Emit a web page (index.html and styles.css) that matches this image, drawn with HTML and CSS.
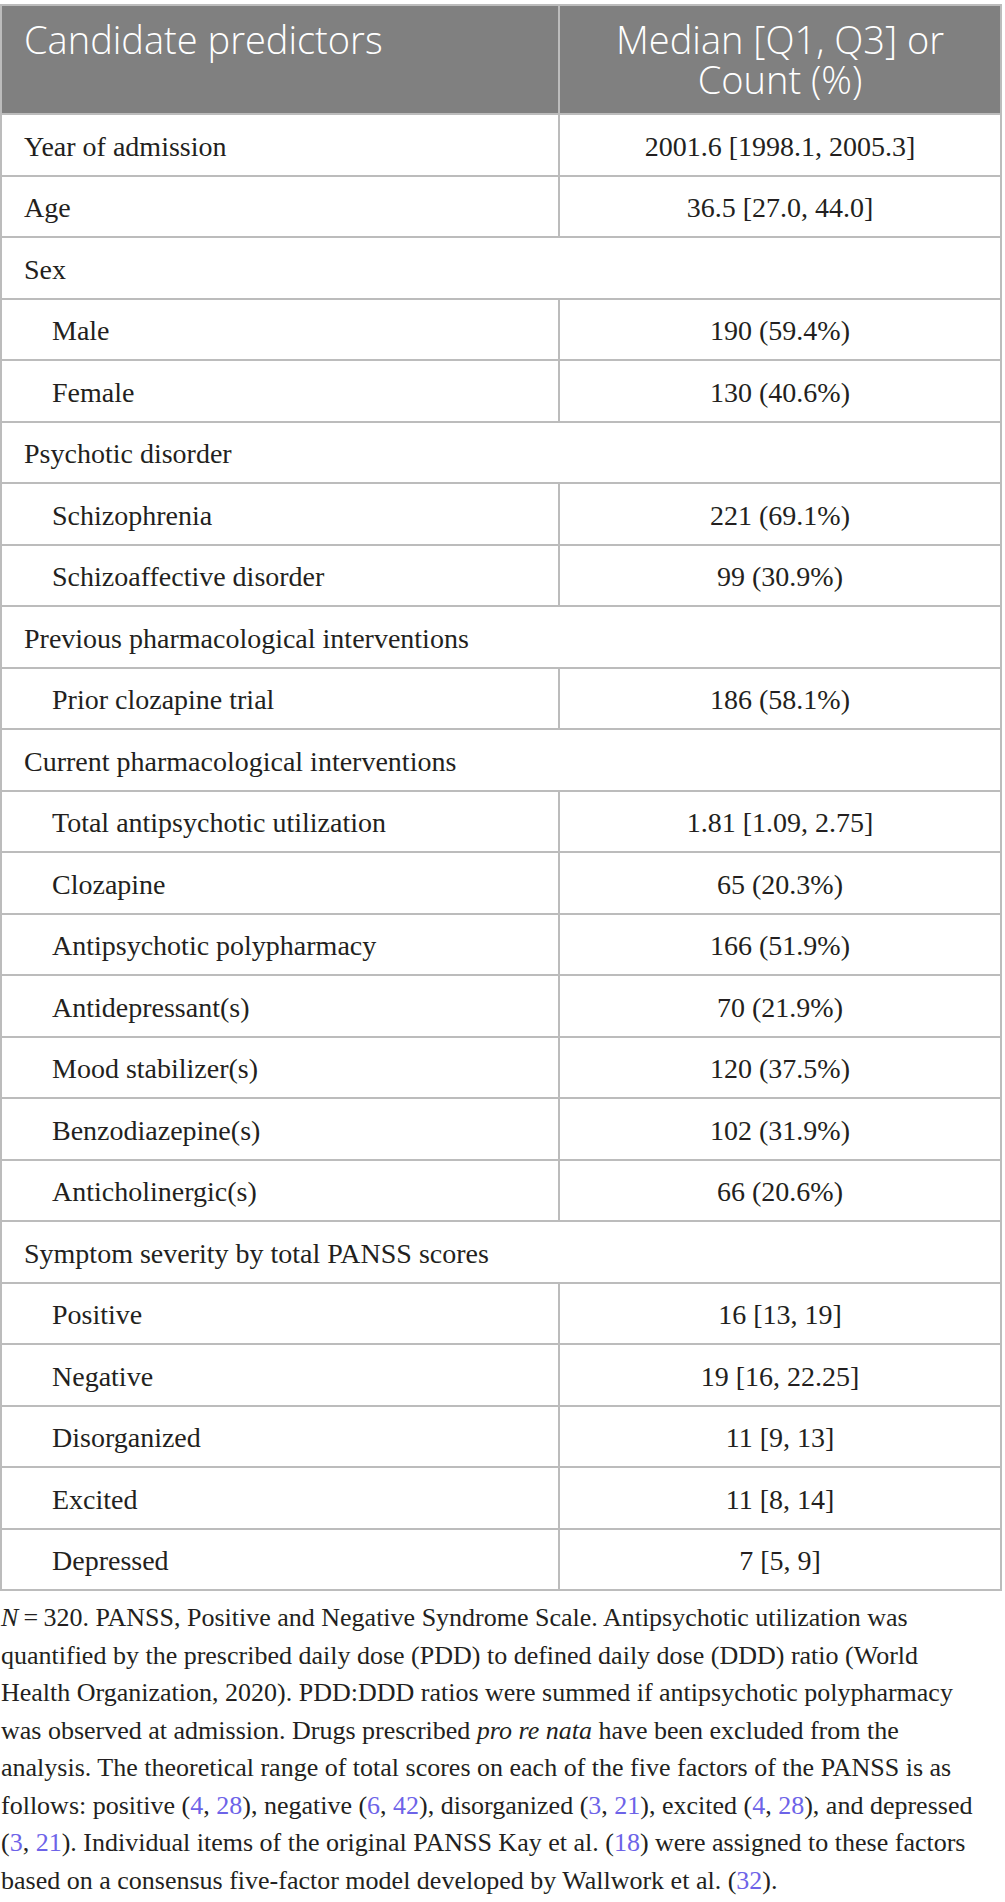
FILE: index.html
```html
<!DOCTYPE html>
<html lang="en">
<head>
    <meta charset="UTF-8">
    <meta name="viewport" content="width=device-width, initial-scale=1.0">
    <title>Candidate predictors</title>
    <link rel="stylesheet" href="styles.css">
</head>
<body>
    <div class="table-wrap">
        <table class="data-table">
            <thead>
                <tr>
                    <th class="label-col">Candidate predictors</th>
                    <th class="value-col">Median [Q1, Q3] or<br>Count (%)</th>
                </tr>
            </thead>
            <tbody>
                <tr>
                    <td>Year of admission</td>
                    <td class="value">2001.6 [1998.1, 2005.3]</td>
                </tr>
                <tr>
                    <td>Age</td>
                    <td class="value">36.5 [27.0, 44.0]</td>
                </tr>
                <tr class="section">
                    <td colspan="2">Sex</td>
                </tr>
                <tr class="sub">
                    <td>Male</td>
                    <td class="value">190 (59.4%)</td>
                </tr>
                <tr class="sub">
                    <td>Female</td>
                    <td class="value">130 (40.6%)</td>
                </tr>
                <tr class="section">
                    <td colspan="2">Psychotic disorder</td>
                </tr>
                <tr class="sub">
                    <td>Schizophrenia</td>
                    <td class="value">221 (69.1%)</td>
                </tr>
                <tr class="sub">
                    <td>Schizoaffective disorder</td>
                    <td class="value">99 (30.9%)</td>
                </tr>
                <tr class="section">
                    <td colspan="2">Previous pharmacological interventions</td>
                </tr>
                <tr class="sub">
                    <td>Prior clozapine trial</td>
                    <td class="value">186 (58.1%)</td>
                </tr>
                <tr class="section">
                    <td colspan="2">Current pharmacological interventions</td>
                </tr>
                <tr class="sub">
                    <td>Total antipsychotic utilization</td>
                    <td class="value">1.81 [1.09, 2.75]</td>
                </tr>
                <tr class="sub">
                    <td>Clozapine</td>
                    <td class="value">65 (20.3%)</td>
                </tr>
                <tr class="sub">
                    <td>Antipsychotic polypharmacy</td>
                    <td class="value">166 (51.9%)</td>
                </tr>
                <tr class="sub">
                    <td>Antidepressant(s)</td>
                    <td class="value">70 (21.9%)</td>
                </tr>
                <tr class="sub">
                    <td>Mood stabilizer(s)</td>
                    <td class="value">120 (37.5%)</td>
                </tr>
                <tr class="sub">
                    <td>Benzodiazepine(s)</td>
                    <td class="value">102 (31.9%)</td>
                </tr>
                <tr class="sub">
                    <td>Anticholinergic(s)</td>
                    <td class="value">66 (20.6%)</td>
                </tr>
                <tr class="section">
                    <td colspan="2">Symptom severity by total PANSS scores</td>
                </tr>
                <tr class="sub">
                    <td>Positive</td>
                    <td class="value">16 [13, 19]</td>
                </tr>
                <tr class="sub">
                    <td>Negative</td>
                    <td class="value">19 [16, 22.25]</td>
                </tr>
                <tr class="sub">
                    <td>Disorganized</td>
                    <td class="value">11 [9, 13]</td>
                </tr>
                <tr class="sub">
                    <td>Excited</td>
                    <td class="value">11 [8, 14]</td>
                </tr>
                <tr class="sub">
                    <td>Depressed</td>
                    <td class="value">7 [5, 9]</td>
                </tr>
            </tbody>
        </table>
    </div>

    <p class="table-note">
        <em>N</em>&#8201;=&#8201;320. PANSS, Positive and Negative Syndrome Scale. Antipsychotic utilization was<br>
        quantified by the prescribed daily dose (PDD) to defined daily dose (DDD) ratio (World<br>
        Health Organization, 2020). PDD:DDD ratios were summed if antipsychotic polypharmacy<br>
        was observed at admission. Drugs prescribed <em>pro re nata</em> have been excluded from the<br>
        analysis. The theoretical range of total scores on each of the five factors of the PANSS is as<br>
        follows: positive (<a href="#">4</a>, <a href="#">28</a>), negative (<a href="#">6</a>, <a href="#">42</a>), disorganized (<a href="#">3</a>, <a href="#">21</a>), excited (<a href="#">4</a>, <a href="#">28</a>), and depressed<br>
        (<a href="#">3</a>, <a href="#">21</a>). Individual items of the original PANSS Kay et al. (<a href="#">18</a>) were assigned to these factors<br>
        based on a consensus five-factor model developed by Wallwork et al. (<a href="#">32</a>).
    </p>
</body>
</html>
```

FILE: styles.css
```css
body {
    margin: 0;
    padding: 4px 0 0;
    background: #fff;
    color: #231f20;
    font-family: "Liberation Serif", "Times New Roman", serif;
}
.table-wrap {
    width: 1002px;
}
.data-table {
    width: 100%;
    border-collapse: collapse;
    table-layout: fixed;
}
.data-table th,
.data-table td {
    border: 2px solid #bcbcbc;
}
.data-table th {
    background: #808080;
    color: #fff;
    font-family: "Open Sans", Arial, sans-serif;
    font-weight: 300;
    font-size: 38px;
    line-height: 40px;
    padding: 13px 16px 14px 22px;
    vertical-align: top;
    text-align: left;
}
.data-table th.label-col {
    width: 518px; /* 558px column minus padding */
}
.data-table th.value-col {
    text-align: center;
    padding-left: 16px;
}
.data-table td {
    font-size: 28px;
    line-height: 32px;
    padding: 15.5px 20px 12px 22px;
}
.data-table td.value {
    text-align: center;
    padding-left: 20px;
}
.data-table tr.sub td:first-child {
    padding-left: 50px;
}
.table-note {
    margin: 8px 0 0;
    padding-left: 1px;
    font-size: 26px;
    line-height: 37.5px;
}
.table-note a {
    color: #6d63e8;
    text-decoration: none;
}
```
